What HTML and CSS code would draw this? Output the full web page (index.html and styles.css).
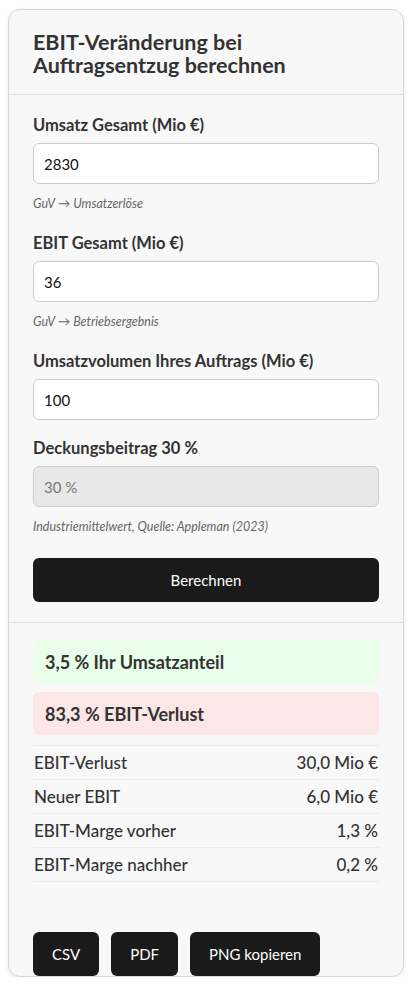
FILE: index.html
```html
<!DOCTYPE html>
<html lang="de">
<head>
  <meta charset="UTF-8">
  <meta name="viewport" content="width=device-width, initial-scale=1.0">
  <title>EBIT-Veränderung bei Auftragsentzug</title>
  <link rel="stylesheet" href="styles.css">
</head>
<body>
  <div class="card">
    <div class="card-header">
      <h1>EBIT-Veränderung bei Auftragsentzug berechnen</h1>
    </div>

    <form class="card-body" id="calc-form">
      <div class="field">
        <label for="umsatz">Umsatz Gesamt (Mio €)</label>
        <input type="text" id="umsatz" value="2830">
        <small class="hint">GuV → Umsatzerlöse</small>
      </div>

      <div class="field">
        <label for="ebit">EBIT Gesamt (Mio €)</label>
        <input type="text" id="ebit" value="36">
        <small class="hint">GuV → Betriebsergebnis</small>
      </div>

      <div class="field">
        <label for="auftrag">Umsatzvolumen Ihres Auftrags (Mio €)</label>
        <input type="text" id="auftrag" value="100">
      </div>

      <div class="field">
        <label for="db">Deckungsbeitrag 30 %</label>
        <input type="text" id="db" value="30 %" disabled>
        <small class="hint">Industriemittelwert, Quelle: Appleman (2023)</small>
      </div>

      <button type="submit" class="btn btn-block">Berechnen</button>
    </form>

    <div class="results">
      <div class="result-box good">3,5 % Ihr Umsatzanteil</div>
      <div class="result-box bad">83,3 % EBIT-Verlust</div>

      <table class="result-table">
        <tr><td>EBIT-Verlust</td><td>30,0 Mio €</td></tr>
        <tr><td>Neuer EBIT</td><td>6,0 Mio €</td></tr>
        <tr><td>EBIT-Marge vorher</td><td>1,3 %</td></tr>
        <tr><td>EBIT-Marge nachher</td><td>0,2 %</td></tr>
      </table>

      <div class="actions">
        <button type="button" class="btn">CSV</button>
        <button type="button" class="btn">PDF</button>
        <button type="button" class="btn">PNG kopieren</button>
      </div>
    </div>
  </div>
</body>
</html>
```

FILE: styles.css
```css
body {
  font-family: "Lato", "Noto Sans", sans-serif;
  margin: 0;
  padding: 9px 14px 0 8px;
  background-color: #fff;
  color: #333;
}

.card {
  background-color: #f8f8f8;
  border: 1px solid #d6d6d6;
  border-radius: 12px;
  box-shadow: 0 2px 6px rgba(0, 0, 0, 0.08);
  height: 968px;
  box-sizing: border-box;
  overflow: hidden;
}

.card-header {
  padding: 21px 24px 17px;
  border-bottom: 1px solid #e0e0e0;
}

h1 {
  margin: 0;
  font-size: 21.5px;
  line-height: 23px;
  font-weight: 700;
  color: #333;
}

.card-body {
  padding: 20px 24px 20px;
  border-bottom: 1px solid #e0e0e0;
}

.field {
  margin-bottom: 18px;
}

label {
  display: block;
  font-size: 16.5px;
  font-weight: 700;
  color: #333;
  margin-bottom: 8px;
}

input {
  display: block;
  width: 100%;
  height: 41px;
  padding: 0 10px;
  border: 1px solid #ccc;
  border-radius: 6px;
  background-color: #fff;
  color: #111;
  font-family: inherit;
  font-size: 15px;
  box-sizing: border-box;
}

input:disabled {
  background-color: #e8e8e8;
  color: #777;
}

.hint {
  display: block;
  margin-top: 12px;
  padding-bottom: 4px;
  font-size: 12.5px;
  font-style: italic;
  color: #666;
}

.btn {
  height: 44px;
  padding: 0 19px;
  border: none;
  border-radius: 6px;
  background-color: #1a1a1a;
  color: #fff;
  font-family: inherit;
  font-size: 15px;
  cursor: pointer;
}

.btn-block {
  display: block;
  width: 100%;
  margin-top: 20px;
}

.results {
  padding: 17px 24px 0;
}

.result-box {
  padding: 11px 12px 10px;
  border-radius: 6px;
  font-size: 18px;
  font-weight: 700;
  color: #333;
  margin-bottom: 9px;
}

.good {
  background-color: #e9ffe9;
}

.bad {
  background-color: #fde6e6;
}

.result-table {
  width: 100%;
  border-collapse: collapse;
  margin-top: 10px;
  font-size: 17px;
  font-weight: 500;
  color: #333;
}

.result-table td {
  height: 33px;
  padding: 0 1px;
  border-top: 1px solid #ececec;
  border-bottom: 1px solid #ececec;
}

.result-table td:last-child {
  text-align: right;
}

.actions {
  display: flex;
  gap: 12px;
  margin-top: 50px;
}
```
